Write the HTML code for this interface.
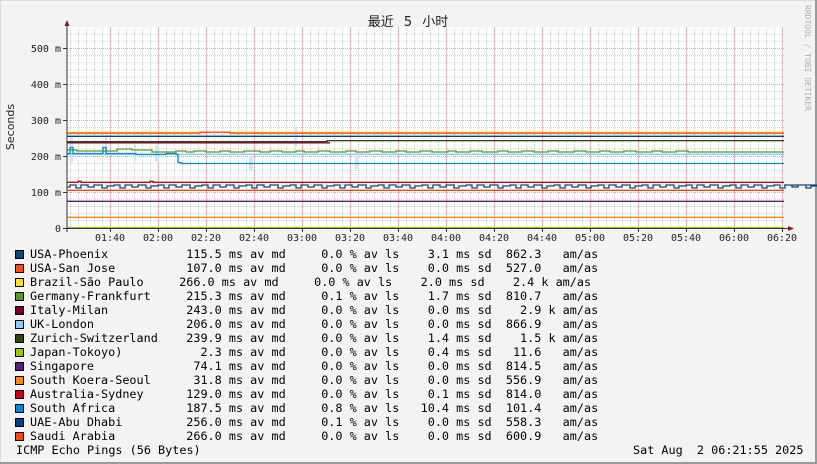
<!DOCTYPE html>
<html><head><meta charset="utf-8">
<style>
html,body{margin:0;padding:0;background:#f3f3f3;}
body{width:817px;height:464px;overflow:hidden;position:relative;}
svg text{font-family:"DejaVu Sans Mono","Liberation Mono",monospace;}
pre{margin:0;font-family:"DejaVu Sans Mono","Liberation Mono",monospace;font-size:11.8px;line-height:14px;color:#000;position:absolute;white-space:pre;}
.sw{position:absolute;left:15px;width:7px;height:7px;border:1px solid #000;}
</style></head>
<body>
<svg width="817" height="464" style="position:absolute;left:0;top:0">
<defs>
<pattern id="mv" x="70" y="0" width="8" height="464" patternUnits="userSpaceOnUse">
<line x1="0.5" y1="0" x2="0.5" y2="464" stroke="#cfcfcf" stroke-width="1" stroke-dasharray="1,1"/>
</pattern>
</defs>
<rect x="0" y="0" width="817" height="464" fill="#f3f3f3"/>
<rect x="0.5" y="0.5" width="815" height="462" fill="none" stroke="#dcdcdc"/>
<line x1="816" y1="0" x2="816" y2="464" stroke="#9a9a9a" stroke-width="2"/>
<line x1="0" y1="463" x2="817" y2="463" stroke="#9a9a9a" stroke-width="2"/>
<rect x="67" y="27" width="717" height="201" fill="#ffffff"/>
<rect x="67" y="27" width="717" height="201" fill="url(#mv)"/>
<g stroke="#d6d6d6" stroke-dasharray="1,1">
<line x1="67" y1="220.8" x2="784" y2="220.8"/><line x1="67" y1="213.6" x2="784" y2="213.6"/><line x1="67" y1="206.5" x2="784" y2="206.5"/><line x1="67" y1="199.3" x2="784" y2="199.3"/>
<line x1="67" y1="184.9" x2="784" y2="184.9"/><line x1="67" y1="177.7" x2="784" y2="177.7"/><line x1="67" y1="170.6" x2="784" y2="170.6"/><line x1="67" y1="163.4" x2="784" y2="163.4"/>
<line x1="67" y1="149" x2="784" y2="149"/><line x1="67" y1="141.8" x2="784" y2="141.8"/><line x1="67" y1="134.7" x2="784" y2="134.7"/><line x1="67" y1="127.5" x2="784" y2="127.5"/>
<line x1="67" y1="113.1" x2="784" y2="113.1"/><line x1="67" y1="105.9" x2="784" y2="105.9"/><line x1="67" y1="98.8" x2="784" y2="98.8"/><line x1="67" y1="91.6" x2="784" y2="91.6"/>
<line x1="67" y1="77.2" x2="784" y2="77.2"/><line x1="67" y1="70" x2="784" y2="70"/><line x1="67" y1="62.9" x2="784" y2="62.9"/><line x1="67" y1="55.7" x2="784" y2="55.7"/>
<line x1="67" y1="41.3" x2="784" y2="41.3"/><line x1="67" y1="34.1" x2="784" y2="34.1"/>
</g>
<g stroke="#f0a0a0" stroke-dasharray="1,1">
<line x1="67" y1="192.5" x2="784" y2="192.5"/><line x1="67" y1="156.5" x2="784" y2="156.5"/><line x1="67" y1="120.5" x2="784" y2="120.5"/><line x1="67" y1="84.5" x2="784" y2="84.5"/><line x1="67" y1="48.5" x2="784" y2="48.5"/>
<line x1="110.5" y1="27" x2="110.5" y2="228"/><line x1="158.5" y1="27" x2="158.5" y2="228"/><line x1="206.5" y1="27" x2="206.5" y2="228"/><line x1="254.5" y1="27" x2="254.5" y2="228"/><line x1="302.5" y1="27" x2="302.5" y2="228"/><line x1="350.5" y1="27" x2="350.5" y2="228"/><line x1="398.5" y1="27" x2="398.5" y2="228"/><line x1="446.5" y1="27" x2="446.5" y2="228"/><line x1="494.5" y1="27" x2="494.5" y2="228"/><line x1="542.5" y1="27" x2="542.5" y2="228"/><line x1="590.5" y1="27" x2="590.5" y2="228"/><line x1="638.5" y1="27" x2="638.5" y2="228"/><line x1="686.5" y1="27" x2="686.5" y2="228"/><line x1="734.5" y1="27" x2="734.5" y2="228"/><line x1="782.5" y1="27" x2="782.5" y2="228"/>
</g>
<g fill="#cfe6fa">
<rect x="70" y="136" width="3" height="26"/><rect x="105" y="134" width="2" height="24"/><rect x="134" y="145" width="2" height="16"/><rect x="155" y="145" width="4" height="17"/><rect x="249" y="156" width="4" height="14"/><rect x="295" y="127" width="2" height="20"/><rect x="355" y="156" width="3" height="13"/>
</g>
<g fill="none" stroke-width="1.3">
<path d="M67 132.3 H784" stroke="#ffdd22"/>
<path d="M67 133.2 H200 v-1 h30 v1 H784" stroke="#ff4a1a"/>
<path d="M67 136.3 H784" stroke="#004488"/>
<path d="M67 142.8 H330" stroke="#770022"/>
<path d="M67 141.6 H327 v-1 H784" stroke="#334411"/>
<path d="M67 150 h10 v1 h40 v-2 h15 v1 h20 v2 h24 v-1 h10 v1 h8 v-1 h12 v1 h14 v-1 h10 v1 h14 v-1 h16 v1 h10 v-1 h12 v1 h14 v-1 h8 v1 h14 v-1 h12 v1 h16 v-1 h10 v1 h14 v-1 h12 v1 h14 v-1 h10 v1 h14 v-1 h12 v1 h16 v-1 h8 v1 h14 v-1 h12 v1 h16 v-1 h10 v1 h14 v-1 h12 v1 h14 v-1 h10 v1 h16 v-1 h12 v1 h14 v-1 h10 v1 h14 v-1 h12 v1 h16 v-1 h10 v1 h14 v-1 h12 v1 H784" stroke="#559922"/>
<path d="M67 154.3 H784" stroke="#88ccff"/>
<path d="M67 153.5 h3 v-6 h3 v6 h30 v-6 h3 v6 h30 v1 h30 v-1 h10 v1 h2 v8 h3 v1 H784" stroke="#0088dd"/>
<path d="M67 182.3 H78 v-1 h3 v1 H150 v-1 h3 v1 H784" stroke="#cc0011"/>
<path d="M67 187 h3 v-2 h6 v3 h5 v-3 h7 v2 h6 v-2 h8 v3 h5 v-2 h7 v-1 h6 v3 h5 v-3 h7 v2 h6 v-2 h8 v3 h5 v-2 h7 v-1 h6 v3 h5 v-3 h7 v2 h6 v-2 h8 v3 h5 v-2 h7 v-1 h6 v3 h5 v-3 h7 v2 h6 v-2 h8 v3 h5 v-2 h7 v-1 h6 v3 h5 v-3 h7 v2 h6 v-2 h8 v3 h5 v-2 h7 v-1 h6 v3 h5 v-3 h7 v2 h6 v-2 h8 v3 h5 v-2 h7 v-1 h6 v3 h5 v-3 h7 v2 h6 v-2 h8 v3 h5 v-2 h7 v-1 h6 v3 h5 v-3 h7 v2 h6 v-2 h8 v3 h5 v-2 h7 v-1 h6 v3 h5 v-3 h7 v2 h6 v-2 h8 v3 h5 v-2 h7 v-1 h6 v3 h5 v-3 h7 v2 h6 v-2 h8 v3 h5 v-2 h7 v-1 h6 v3 h5 v-3 h7 v2 h6 v-2 h8 v3 h5 v-2 h7 v-1 h6 v3 h5 v-3 h7 v2 h6 v-2 h8 v3 h5 v-2 h7 v-1 h6 v3 h5 v-3 h7 v2 h6 v-2 h8 v3 h5 v-2 h7 v-1 h6 v3 h5 v-3 h7 v2 h6 v-2 h8 v3 h5 v-2 h7 v-1 h6 v3 h5 v-3 h7 v2 h6 v-2 h8 v3 h5 v-2 h7 v-1 h6 v3 h5 v-3 h7 v2 h6 v-2 h8 v3 h5 v-2 h7 v-1 h6 v3 h5 v-3 h7 v2 h6 v-2 h8 v3 h5 v-2 h7 v-1 h6 v3 h5 v-3 h7 v2 h6 v-2 h8 v3 h5 v-2 h7 v-1 H784" stroke="#0b4a7f"/>
<path d="M67 190.3 H784" stroke="#ff4411"/>
<path d="M67 201.3 H784" stroke="#552277"/>
<path d="M67 217.3 H784" stroke="#ff8811"/>
<path d="M67 227.5 H784" stroke="#99cc00"/>
</g>
<line x1="67" y1="24" x2="67" y2="232" stroke="#333" stroke-width="1"/>
<line x1="63" y1="228.5" x2="789" y2="228.5" stroke="#333" stroke-width="1"/>
<polygon points="64.5,26 69.5,26 67,20" fill="#8b1a1a"/>
<polygon points="788,226 788,231 794,228.5" fill="#8b1a1a"/>
<g stroke="#333"><line x1="63" y1="192.5" x2="67" y2="192.5"/><line x1="63" y1="156.5" x2="67" y2="156.5"/><line x1="63" y1="120.5" x2="67" y2="120.5"/><line x1="63" y1="84.5" x2="67" y2="84.5"/><line x1="63" y1="48.5" x2="67" y2="48.5"/>
<line x1="110.5" y1="228" x2="110.5" y2="232"/><line x1="158.5" y1="228" x2="158.5" y2="232"/><line x1="206.5" y1="228" x2="206.5" y2="232"/><line x1="254.5" y1="228" x2="254.5" y2="232"/><line x1="302.5" y1="228" x2="302.5" y2="232"/><line x1="350.5" y1="228" x2="350.5" y2="232"/><line x1="398.5" y1="228" x2="398.5" y2="232"/><line x1="446.5" y1="228" x2="446.5" y2="232"/><line x1="494.5" y1="228" x2="494.5" y2="232"/><line x1="542.5" y1="228" x2="542.5" y2="232"/><line x1="590.5" y1="228" x2="590.5" y2="232"/><line x1="638.5" y1="228" x2="638.5" y2="232"/><line x1="686.5" y1="228" x2="686.5" y2="232"/><line x1="734.5" y1="228" x2="734.5" y2="232"/><line x1="782.5" y1="228" x2="782.5" y2="232"/></g>
<g font-size="10" fill="#222" text-anchor="end">
<text x="61" y="232">0</text><text x="61" y="196">100 m</text><text x="61" y="160">200 m</text><text x="61" y="124">300 m</text><text x="61" y="88">400 m</text><text x="61" y="52">500 m</text>
</g>
<g font-size="10" fill="#222" text-anchor="middle">
<text x="110" y="241">01:40</text><text x="158" y="241">02:00</text><text x="206" y="241">02:20</text><text x="254" y="241">02:40</text><text x="302" y="241">03:00</text><text x="350" y="241">03:20</text><text x="398" y="241">03:40</text><text x="446" y="241">04:00</text><text x="494" y="241">04:20</text><text x="542" y="241">04:40</text><text x="590" y="241">05:00</text><text x="638" y="241">05:20</text><text x="686" y="241">05:40</text><text x="734" y="241">06:00</text><text x="782" y="241">06:20</text>
</g>
<text x="14" y="127" font-size="11" fill="#222" text-anchor="middle" transform="rotate(-90 14 127)" style="font-family:'DejaVu Sans','Liberation Sans',sans-serif">Seconds</text>
<text x="408" y="26" font-size="13" fill="#222" text-anchor="middle" word-spacing="6" style="font-family:'DejaVu Sans','Noto Sans CJK SC',sans-serif">最近 5 小时</text>
<text x="805" y="5" font-size="8" fill="#b0b0b0" transform="rotate(90 805 5)">RRDTOOL / TOBI OETIKER</text>
</svg>

<div class="sw" style="top:250px;background:#0b4a7f"></div>
<div class="sw" style="top:264px;background:#ff4a1a"></div>
<div class="sw" style="top:278px;background:#ffdd22"></div>
<div class="sw" style="top:292px;background:#559922"></div>
<div class="sw" style="top:306px;background:#770022"></div>
<div class="sw" style="top:320px;background:#88ccff"></div>
<div class="sw" style="top:334px;background:#334411"></div>
<div class="sw" style="top:348px;background:#99cc00"></div>
<div class="sw" style="top:362px;background:#552277"></div>
<div class="sw" style="top:376px;background:#ff8811"></div>
<div class="sw" style="top:390px;background:#cc0011"></div>
<div class="sw" style="top:404px;background:#0088dd"></div>
<div class="sw" style="top:418px;background:#004488"></div>
<div class="sw" style="top:432px;background:#ff4411"></div>

<pre style="left:30px;top:247px;">USA-Phoenix           115.5 ms av md     0.0 % av ls    3.1 ms sd  862.3   am/as
USA-San Jose          107.0 ms av md     0.0 % av ls    0.0 ms sd  527.0   am/as
Brazil-São Paulo     266.0 ms av md     0.0 % av ls    2.0 ms sd    2.4 k am/as
Germany-Frankfurt     215.3 ms av md     0.1 % av ls    1.7 ms sd  810.7   am/as
Italy-Milan           243.0 ms av md     0.0 % av ls    0.0 ms sd    2.9 k am/as
UK-London             206.0 ms av md     0.0 % av ls    0.0 ms sd  866.9   am/as
Zurich-Switzerland    239.9 ms av md     0.0 % av ls    1.4 ms sd    1.5 k am/as
Japan-Tokoyo)           2.3 ms av md     0.0 % av ls    0.4 ms sd   11.6   am/as
Singapore              74.1 ms av md     0.0 % av ls    0.0 ms sd  814.5   am/as
South Koera-Seoul      31.8 ms av md     0.0 % av ls    0.0 ms sd  556.9   am/as
Australia-Sydney      129.0 ms av md     0.0 % av ls    0.1 ms sd  814.0   am/as
South Africa          187.5 ms av md     0.8 % av ls   10.4 ms sd  101.4   am/as
UAE-Abu Dhabi         256.0 ms av md     0.1 % av ls    0.0 ms sd  558.3   am/as
Saudi Arabia          266.0 ms av md     0.0 % av ls    0.0 ms sd  600.9   am/as</pre>
<pre style="left:16px;top:443px;">ICMP Echo Pings (56 Bytes)</pre>
<pre style="left:633px;top:443px;">Sat Aug  2 06:21:55 2025</pre>
</body></html>
